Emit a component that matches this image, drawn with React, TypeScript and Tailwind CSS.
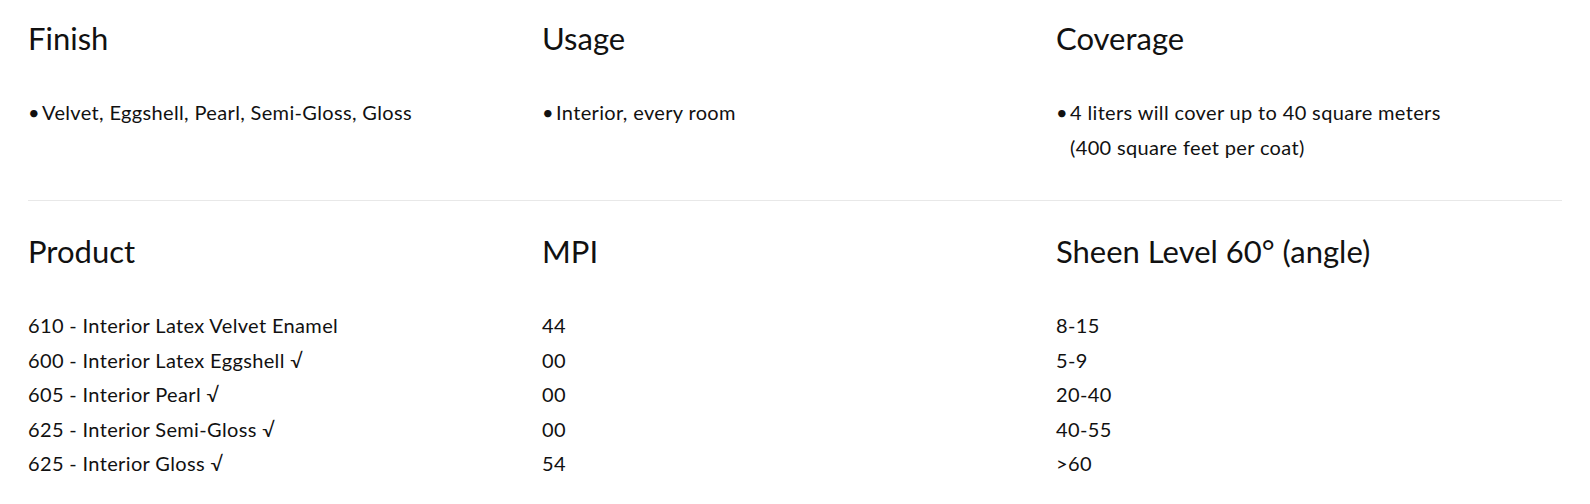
const specs = [
  { title: "Finish", lines: ["Velvet, Eggshell, Pearl, Semi-Gloss, Gloss"] },
  { title: "Usage", lines: ["Interior, every room"] },
  {
    title: "Coverage",
    lines: ["4 liters will cover up to 40 square meters", "(400 square feet per coat)"],
  },
];

const products = [
  { name: "610 - Interior Latex Velvet Enamel", mpi: "44", sheen: "8-15" },
  { name: "600 - Interior Latex Eggshell \u221A", mpi: "00", sheen: "5-9" },
  { name: "605 - Interior Pearl \u221A", mpi: "00", sheen: "20-40" },
  { name: "625 - Interior Semi-Gloss \u221A", mpi: "00", sheen: "40-55" },
  { name: "625 - Interior Gloss \u221A", mpi: "54", sheen: ">60" },
];

export default function App() {
  return (
    <div className="min-h-screen bg-white px-7 pt-5 text-[#111] font-['Lato',sans-serif]">
      <div className="grid grid-cols-3 gap-x-2">
        {specs.map((s) => (
          <div key={s.title}>
            <h3 className="text-[31px] leading-[1.2]">{s.title}</h3>
            <div className="mt-[38px] flex text-[20px] leading-[34.5px] tracking-[0.35px]">
              <span className="w-[14px] shrink-0">&bull;</span>
              <p>
                {s.lines.map((l, i) => (
                  <span key={i} className="block">
                    {l}
                  </span>
                ))}
              </p>
            </div>
          </div>
        ))}
      </div>

      <hr className="mt-9 border-t border-[#e8e8e8]" />

      <div className="mt-8 grid grid-cols-3 gap-x-2">
        <h3 className="text-[31px] leading-[1.2]">Product</h3>
        <h3 className="text-[31px] leading-[1.2]">MPI</h3>
        <h3 className="text-[31px] leading-[1.2]">Sheen Level 60&deg; (angle)</h3>
      </div>

      <div className="mt-[38px] text-[20px] leading-[34.5px] tracking-[0.35px]">
        {products.map((p, i) => (
          <div key={i} className="grid grid-cols-3 gap-x-2">
            <span>{p.name}</span>
            <span>{p.mpi}</span>
            <span>{p.sheen}</span>
          </div>
        ))}
      </div>
    </div>
  );
}
